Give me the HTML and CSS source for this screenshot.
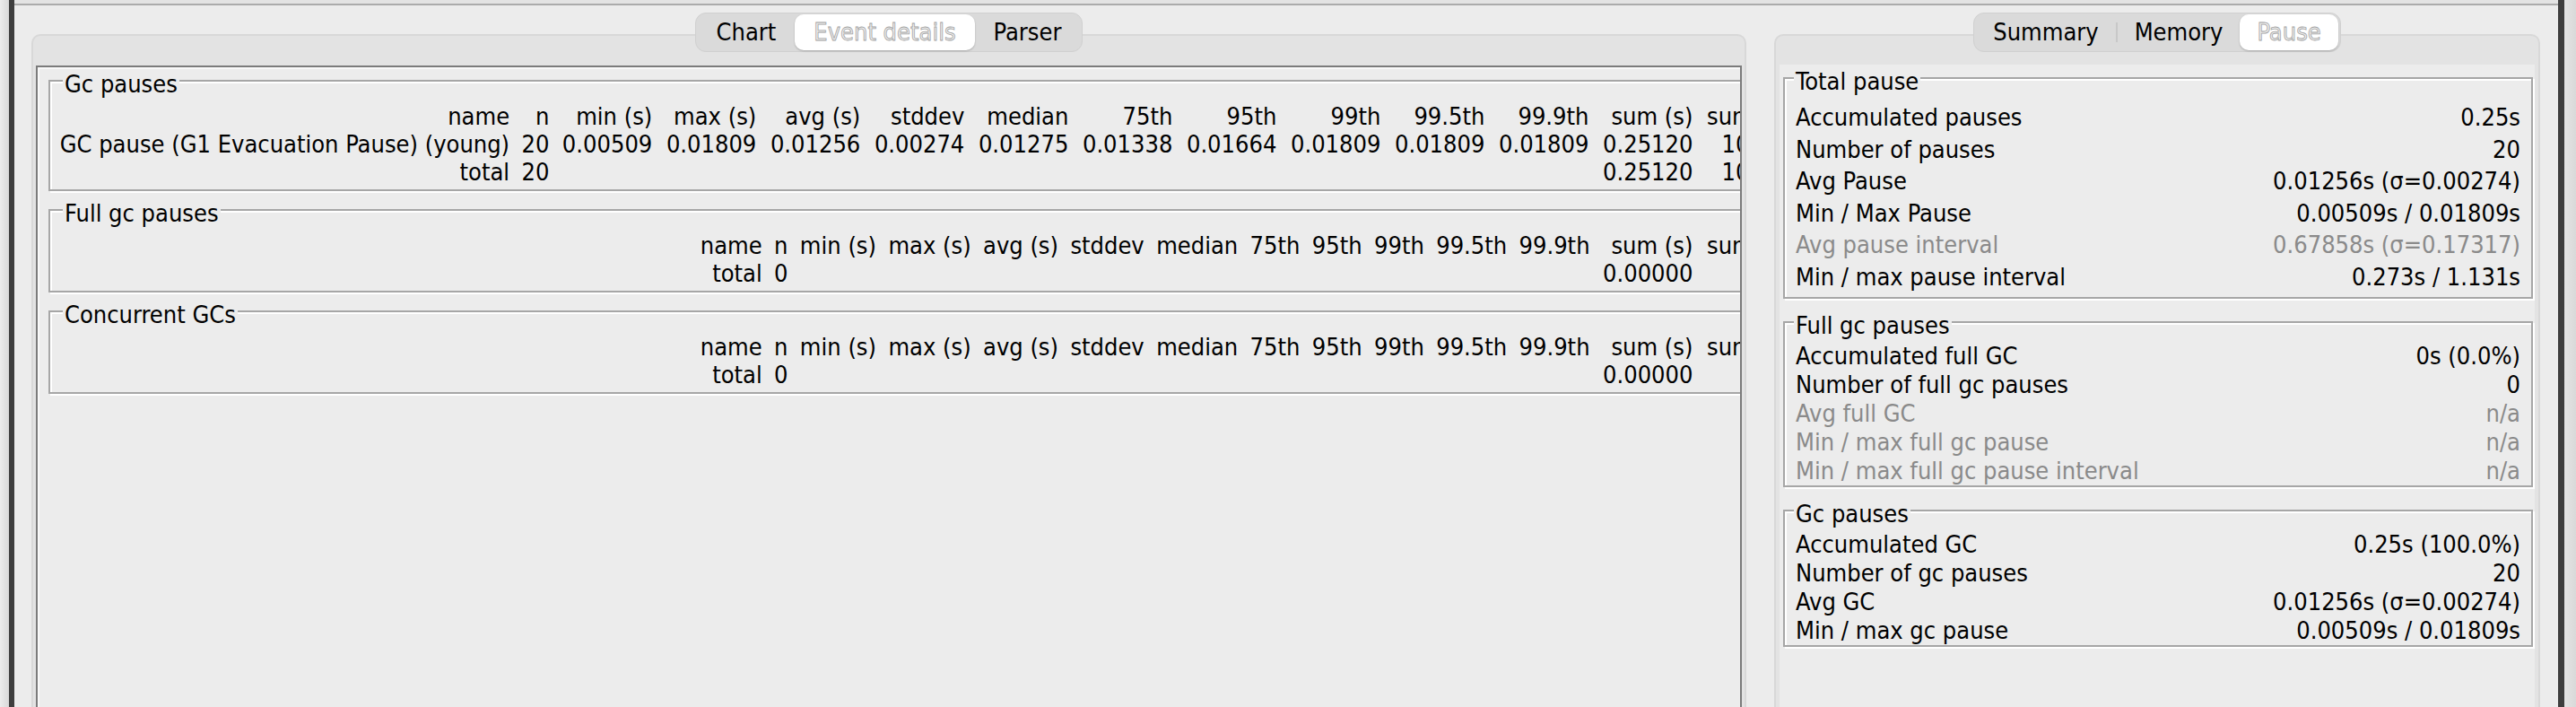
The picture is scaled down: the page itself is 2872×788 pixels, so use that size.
FILE: index.html
```html
<!DOCTYPE html>
<html lang="en">
<head>
<meta charset="utf-8">
<title>GCViewer - Event details</title>
<link rel="stylesheet" href="styles.css">
</head>
<body>
<div class="desk">
  <div class="window">
    <div class="topstrip"></div>
    <div class="content">
      <section class="pane pane-left">
        <div class="segbar">
          <span class="seg">Chart</span>
          <span class="seg sel">Event details</span>
          <span class="seg">Parser</span>
        </div>
        <div class="pane-box">
          <div class="scrollbox">
            <div class="scroll-content">
              <div class="group tgroup">
                <div class="group-title">Gc pauses</div>
                <table class="stats main">
                  <tr><td>name</td><td>n</td><td>min (s)</td><td>max (s)</td><td>avg (s)</td><td>stddev</td><td>median</td><td>75th</td><td>95th</td><td>99th</td><td>99.5th</td><td>99.9th</td><td>sum (s)</td><td>sum (%)</td></tr>
                  <tr><td>GC pause (G1 Evacuation Pause) (young)</td><td>20</td><td>0.00509</td><td>0.01809</td><td>0.01256</td><td>0.00274</td><td>0.01275</td><td>0.01338</td><td>0.01664</td><td>0.01809</td><td>0.01809</td><td>0.01809</td><td>0.25120</td><td>100.00</td></tr>
                  <tr><td>total</td><td>20</td><td></td><td></td><td></td><td></td><td></td><td></td><td></td><td></td><td></td><td></td><td>0.25120</td><td>100.00</td></tr>
                </table>
              </div>
              <div class="group tgroup">
                <div class="group-title">Full gc pauses</div>
                <table class="stats fit">
                  <tr><td>name</td><td>n</td><td>min (s)</td><td>max (s)</td><td>avg (s)</td><td>stddev</td><td>median</td><td>75th</td><td>95th</td><td>99th</td><td>99.5th</td><td>99.9th</td><td>sum (s)</td><td>sum (%)</td></tr>
                  <tr><td>total</td><td>0</td><td></td><td></td><td></td><td></td><td></td><td></td><td></td><td></td><td></td><td></td><td>0.00000</td><td></td></tr>
                </table>
              </div>
              <div class="group tgroup">
                <div class="group-title">Concurrent GCs</div>
                <table class="stats fit">
                  <tr><td>name</td><td>n</td><td>min (s)</td><td>max (s)</td><td>avg (s)</td><td>stddev</td><td>median</td><td>75th</td><td>95th</td><td>99th</td><td>99.5th</td><td>99.9th</td><td>sum (s)</td><td>sum (%)</td></tr>
                  <tr><td>total</td><td>0</td><td></td><td></td><td></td><td></td><td></td><td></td><td></td><td></td><td></td><td></td><td>0.00000</td><td></td></tr>
                </table>
              </div>
            </div>
          </div>
        </div>
      </section>

      <section class="pane pane-right">
        <div class="segbar">
          <span class="seg">Summary</span>
          <span class="sep"></span>
          <span class="seg">Memory</span>
          <span class="seg sel">Pause</span>
        </div>
        <div class="pane-box">
          <div class="pause-content">
            <div class="group sgroup tall">
              <div class="group-title">Total pause</div>
              <div class="row"><span>Accumulated pauses</span><span>0.25s</span></div>
              <div class="row"><span>Number of pauses</span><span>20</span></div>
              <div class="row"><span>Avg Pause</span><span>0.01256s (σ=0.00274)</span></div>
              <div class="row"><span>Min / Max Pause</span><span>0.00509s / 0.01809s</span></div>
              <div class="row dim"><span>Avg pause interval</span><span>0.67858s (σ=0.17317)</span></div>
              <div class="row"><span>Min / max pause interval</span><span>0.273s / 1.131s</span></div>
            </div>
            <div class="group sgroup">
              <div class="group-title">Full gc pauses</div>
              <div class="row"><span>Accumulated full GC</span><span>0s (0.0%)</span></div>
              <div class="row"><span>Number of full gc pauses</span><span>0</span></div>
              <div class="row dim"><span>Avg full GC</span><span>n/a</span></div>
              <div class="row dim"><span>Min / max full gc pause</span><span>n/a</span></div>
              <div class="row dim"><span>Min / max full gc pause interval</span><span>n/a</span></div>
            </div>
            <div class="group sgroup">
              <div class="group-title">Gc pauses</div>
              <div class="row"><span>Accumulated GC</span><span>0.25s (100.0%)</span></div>
              <div class="row"><span>Number of gc pauses</span><span>20</span></div>
              <div class="row"><span>Avg GC</span><span>0.01256s (σ=0.00274)</span></div>
              <div class="row"><span>Min / max gc pause</span><span>0.00509s / 0.01809s</span></div>
            </div>
          </div>
        </div>
      </section>
    </div>
  </div>
</div>
</body>
</html>
```

FILE: styles.css
```css
* { box-sizing: border-box; }

html, body {
  margin: 0;
  padding: 0;
}

body {
  width: 2872px;
  height: 788px;
  overflow: hidden;
  background: #e2e2e2;
  font-family: "DejaVu Sans", "Liberation Sans", sans-serif;
  font-stretch: condensed;
  font-size: 27px;
  color: #000;
}

.desk {
  display: flex;
  height: 788px;
  padding-left: 10px;
  padding-right: 13px;
  background: linear-gradient(to right, #ececec 0, #d9d9d9 10px, #e4e4e4 12px, #e4e4e4 2859px, #d9d9d9 2872px);
}

.window {
  flex: 1;
  display: flex;
  flex-direction: column;
  height: 788px;
  overflow: hidden;
  background: #ececec;
  border-left: 6px solid #3e3e3e;
  border-right: 7px solid #3e3e3e;
}

.topstrip {
  flex: none;
  height: 6px;
  background: #e3e3e3;
  border-bottom: 2px solid #ababab;
}

.content {
  flex: 1;
  min-height: 0;
  display: flex;
  gap: 31px;
  padding: 8px 20px 0 19px;
}

.pane {
  display: flex;
  flex-direction: column;
  align-items: center;
}

.pane-left { width: 1912px; }
.pane-right { width: 854px; }

/* segmented tab control */
.segbar {
  position: relative;
  z-index: 1;
  flex: none;
  display: flex;
  align-items: center;
  height: 44px;
  padding: 0 2px;
  margin-bottom: -20px;
  background: #dadada;
  border: 1px solid #d0d0d0;
  border-radius: 12px;
}

.seg {
  line-height: 40px;
  padding: 0 21px;
  white-space: nowrap;
  color: #000;
}

.pane-right .seg { padding: 0 19px; }

.seg.sel {
  background: #ffffff;
  border-radius: 10px;
  box-shadow: 0 1px 2px rgba(0, 0, 0, 0.22);
  color: #efefef;
  -webkit-text-stroke: 0.8px #a3a3a3;
}

.sep {
  width: 2px;
  height: 22px;
  background: #c8c8c8;
}

.pane-box {
  align-self: stretch;
  flex: 1;
  margin-bottom: -20px;
  display: flex;
  flex-direction: column;
  background: #e3e3e3;
  border: 2px solid #d8d8d8;
  border-radius: 10px 10px 0 0;
}

.pane-left .pane-box { padding: 33px 3px 0 3px; }
.pane-right .pane-box { padding: 32px 4px 0 4px; }

/* left: scroll pane with statistics tables */
.scrollbox {
  flex: 1;
  min-height: 0;
  overflow: hidden;
  background: #ececec;
  border: 2px solid #7b7b7b;
  box-shadow: inset 2px 2px 0 #f9f9f9;
  padding: 14px 0 0 12px;
}

.scroll-content {
  width: max-content;
}

.group {
  border: 2px solid #a6a6a6;
  box-shadow: 2px 2px 0 #ffffff, inset 2px 2px 0 #ffffff;
}

.group-title {
  width: max-content;
  margin: -13px 0 0 10px;
  padding: 0 2px;
  line-height: 31px;
  background: #ececec;
  white-space: nowrap;
}

.tgroup {
  margin-bottom: 20px;
  padding: 0 0 4px 4px;
}

.tgroup .group-title { margin-bottom: 5px; }

.stats {
  border-collapse: collapse;
  line-height: 31px;
}

.stats td {
  padding: 0 6.7px;
  text-align: right;
  white-space: nowrap;
}

.stats td:nth-last-child(-n+2),
.stats.main td + td + td {
  padding: 0 7.8px;
}

.stats.fit { width: 100%; }
.stats.fit td + td { width: 1px; }

/* right: pause summary */
.pause-content {
  flex: 1;
  background: #ececec;
  padding: 14px 2px 0 4px;
}

.sgroup {
  margin-bottom: 25px;
  padding: 0 12px 0 12px;
}

.sgroup .group-title {
  margin-left: -2px;
  margin-bottom: 3px;
}

.row {
  display: flex;
  justify-content: space-between;
  line-height: 32px;
  white-space: nowrap;
}

.sgroup.tall { padding-bottom: 4px; }
.sgroup.tall .group-title { margin-bottom: 7px; }
.sgroup.tall .row { line-height: 35.6px; }

.dim { color: #8a8a8a; }
```
